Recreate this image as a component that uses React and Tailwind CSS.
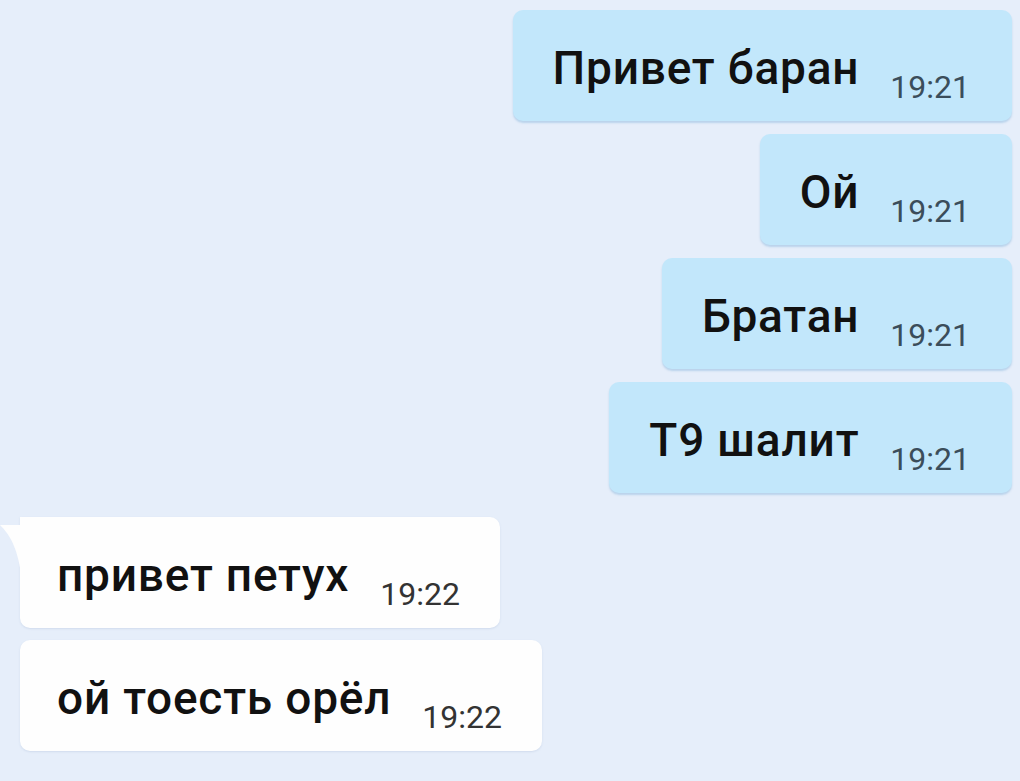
const outgoing = [
  { text: 'Привет баран', time: '19:21' },
  { text: 'Ой', time: '19:21' },
  { text: 'Братан', time: '19:21' },
  { text: 'Т9 шалит', time: '19:21' },
]

const incoming = [
  { text: 'привет петух', time: '19:22', tail: true },
  { text: 'ой тоесть орёл', time: '19:22' },
]

function Bubble({ text, time, mine, tail }) {
  return (
    <div
      className={
        'relative flex h-[111px] items-start ' +
        (mine
          ? 'rounded-[10px] bg-[#c2e7fb] pl-[40px] pr-[42px] shadow-[0_2px_2px_rgba(130,180,220,0.45)]'
          : 'bg-[#fefefe] pl-[37px] pr-[40px] shadow-[0_1px_2px_rgba(160,180,210,0.3)] ' +
            (tail ? 'rounded-[10px] rounded-tl-none' : 'rounded-[10px]'))
      }
    >
      {tail ? (
        <svg
          className="absolute -left-[20px] top-0"
          width="21"
          height="56"
          viewBox="0 0 21 56"
        >
          <path d="M21 8 L0 8 C10 18 17 30 21 56 Z" fill="#fefefe" />
        </svg>
      ) : null}
      <span className="mt-[35px] text-[46px] font-medium leading-none tracking-[0.8px] text-[#111]">
        {text}
      </span>
      <span
        className={
          'ml-[31px] mt-[61px] text-[32px] leading-none ' +
          (mine ? 'text-[#3b4d5a]' : 'text-[#333]')
        }
      >
        {time}
      </span>
    </div>
  )
}

export default function App() {
  return (
    <div
      className="h-[781px] w-[1020px] overflow-hidden bg-[#e6eefa]"
      style={{ fontFamily: 'Roboto, "Noto Sans", sans-serif' }}
    >
      <div className="flex flex-col items-end gap-[13px] pr-[8px] pt-[10px]">
        {outgoing.map((m, i) => (
          <Bubble key={i} {...m} mine />
        ))}
      </div>
      <div className="mt-[24px] flex flex-col items-start gap-[12px] pl-[20px]">
        {incoming.map((m, i) => (
          <Bubble key={i} {...m} />
        ))}
      </div>
    </div>
  )
}
